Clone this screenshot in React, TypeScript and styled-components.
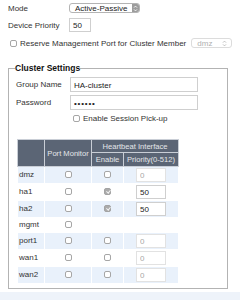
import React from 'react'
import styled, {createGlobalStyle} from 'styled-components'

const GlobalStyle = createGlobalStyle`
    body {
        margin: 0;
        background: #fff;
        font-family: "Liberation Sans", Arial, sans-serif;
        font-size: 8px;
        color: #333;
    }
`

const Page = styled.div`
    width: 240px;
    height: 300px;
    overflow: hidden;
`

const Top = styled.div`
    padding: 3px 0 0 8px;
`

const FieldRow = styled.div<{ h: number; mt?: number }>`
    display: flex;
    align-items: center;
    height: ${p => p.h}px;
    margin-top: ${p => p.mt || 0}px;
`

const Label = styled.div<{ w: number }>`
    width: ${p => p.w}px;
    flex-shrink: 0;
    color: #333;
`

const SelectBox = styled.div<{ w: number; disabled?: boolean }>`
    display: flex;
    align-items: center;
    justify-content: space-between;
    box-sizing: border-box;
    width: ${p => p.w}px;
    height: 10px;
    border: 1px solid ${p => (p.disabled ? '#dcdcdc' : '#b4b4b4')};
    border-radius: 3px;
    background: #fff;
    color: ${p => (p.disabled ? '#b0b0b0' : '#222')};
    padding-left: 5px;
    overflow: hidden;
`

const SelectArrow = styled.span<{ filled?: boolean }>`
    display: flex;
    align-items: center;
    justify-content: center;
    width: 7px;
    height: 100%;
    background: ${p => (p.filled ? '#9c9c9c' : 'transparent')};
    margin-right: ${p => (p.filled ? 0 : 3)}px;
`

const TextInput = styled.input<{ w: number; h: number; muted?: boolean }>`
    box-sizing: border-box;
    width: ${p => p.w}px;
    height: ${p => p.h}px;
    margin: 0;
    padding: 1px 0 0 3px;
    border: 1px solid ${p => (p.muted ? '#e2e2e2' : '#cfcfcf')};
    border-radius: 0;
    background: #fff;
    font-family: "Liberation Sans", Arial, sans-serif;
    font-size: 8px;
    color: ${p => (p.muted ? '#a8a8a8' : '#222')};
    outline: none;
`

const Check = styled.input`
    appearance: none;
    box-sizing: border-box;
    width: 7px;
    height: 7px;
    margin: 0;
    border: 1px solid #a6a6a6;
    border-radius: 2px;
    background: #fff;
    position: relative;
    vertical-align: middle;

    &:checked {
        background: #ababab;
        border-color: #a3a3a3;
    }
    &:checked::after {
        content: "";
        position: absolute;
        left: 1.5px;
        top: 0;
        width: 1.5px;
        height: 3px;
        border: solid #f4f4f4;
        border-width: 0 1px 1px 0;
        transform: rotate(40deg);
    }
`

const CheckLabel = styled.label<{ ml?: number }>`
    display: flex;
    align-items: center;
    gap: 3px;
    margin-left: ${p => p.ml || 0}px;
    color: #333;
`

const Group = styled.fieldset`
    box-sizing: border-box;
    width: 220px;
    height: 226px;
    margin: 15px 0 0 8px;
    padding: 0 0 0 7px;
    border: 1px solid #b3b3b3;
`

const Legend = styled.legend`
    padding: 0;
    margin-left: -1px;
    font-weight: bold;
    font-size: 8.5px;
    color: #111;
    line-height: 10px;
`

const Grid = styled.table`
    border-collapse: collapse;
    margin: 16px 0 0 1px;
    table-layout: fixed;
    width: 161px;
`

const Th = styled.th<{ h?: number }>`
    background: #5b6575;
    color: #e4e6ea;
    font-weight: normal;
    font-size: 7.6px;
    padding: 0;
    height: ${p => p.h || 12}px;
    border: 1px solid #c9ced6;
    text-align: center;
    white-space: nowrap;
    overflow: visible;
`

const Tr = styled.tr<{ shaded: boolean }>`
    background: ${p => (p.shaded ? '#e9f1fb' : '#fff')};
`

const Td = styled.td<{ h: number; left?: boolean }>`
    height: ${p => p.h}px;
    padding: 0 0 0 ${p => (p.left ? 1 : 0)}px;
    border: 1px solid #fff;
    text-align: ${p => (p.left ? 'left' : 'center')};
    vertical-align: middle;
    color: #333;
    line-height: 8px;
`

const BottomStrip = styled.div`
    height: 10px;
    margin-top: 3px;
    background: #eef3fa;
`

function Chevrons({color}: { color: string }): React.ReactElement {
    return (
        <svg width="5" height="7" viewBox="0 0 5 7">
            <path d="M1 2.6 L2.5 1.1 L4 2.6 M1 4.4 L2.5 5.9 L4 4.4" fill="none" stroke={color} strokeWidth="0.9"/>
        </svg>
    )
}

interface IPortRow {
    name: string;
    monitor: boolean;
    enable?: boolean;
    priority?: string;
}

const ports: IPortRow[] = [
    {name: 'dmz', monitor: false, enable: false, priority: '0'},
    {name: 'ha1', monitor: false, enable: true, priority: '50'},
    {name: 'ha2', monitor: false, enable: true, priority: '50'},
    {name: 'mgmt', monitor: false},
    {name: 'port1', monitor: false, enable: false, priority: '0'},
    {name: 'wan1', monitor: false, enable: false, priority: '0'},
    {name: 'wan2', monitor: false, enable: false, priority: '0'},
]

export default function App(): React.ReactElement {
    return (
        <Page>
            <GlobalStyle/>
            <Top>
                <FieldRow h={10}>
                    <Label w={61}>Mode</Label>
                    <SelectBox w={71}>
                        Active-Passive
                        <SelectArrow filled><Chevrons color="#fff"/></SelectArrow>
                    </SelectBox>
                </FieldRow>
                <FieldRow h={14} mt={5}>
                    <Label w={61}>Device Priority</Label>
                    <TextInput w={22} h={14} defaultValue="50" readOnly/>
                </FieldRow>
                <FieldRow h={10} mt={6}>
                    <CheckLabel ml={2}>
                        <Check type="checkbox"/>
                        Reserve Management Port for Cluster Member
                    </CheckLabel>
                    <SelectBox w={41} disabled style={{marginLeft: 5}}>
                        dmz
                        <SelectArrow><Chevrons color="#b8b8b8"/></SelectArrow>
                    </SelectBox>
                </FieldRow>
            </Top>
            <Group>
                <Legend>Cluster Settings</Legend>
                <FieldRow h={15} mt={4}>
                    <Label w={54}>Group Name</Label>
                    <TextInput w={128} h={15} defaultValue="HA-cluster" readOnly/>
                </FieldRow>
                <FieldRow h={15} mt={3}>
                    <Label w={54}>Password</Label>
                    <TextInput w={128} h={15} type="password" defaultValue="secret" readOnly style={{letterSpacing: 0.8}}/>
                </FieldRow>
                <FieldRow h={10} mt={3}>
                    <CheckLabel ml={57}>
                        <Check type="checkbox"/>
                        Enable Session Pick-up
                    </CheckLabel>
                </FieldRow>
                <Grid>
                    <colgroup>
                        <col style={{width: 27}}/>
                        <col style={{width: 47}}/>
                        <col style={{width: 32}}/>
                        <col style={{width: 55}}/>
                    </colgroup>
                    <thead>
                        <tr>
                            <Th rowSpan={2}/>
                            <Th rowSpan={2}>Port Monitor</Th>
                            <Th colSpan={2}>Heartbeat Interface</Th>
                        </tr>
                        <tr>
                            <Th h={13}>Enable</Th>
                            <Th h={13}>Priority(0-512)</Th>
                        </tr>
                    </thead>
                    <tbody>
                        {ports.map((port, i) => {
                            const h = port.priority === undefined ? 14 : 16
                            return (
                                <Tr key={port.name} shaded={i % 2 === 0}>
                                    <Td h={h} left>{port.name}</Td>
                                    <Td h={h}><Check type="checkbox" defaultChecked={port.monitor}/></Td>
                                    <Td h={h}>
                                        {port.enable !== undefined &&
                                            <Check type="checkbox" defaultChecked={port.enable}/>}
                                    </Td>
                                    <Td h={h}>
                                        {port.priority !== undefined &&
                                            <TextInput
                                                w={30}
                                                h={14}
                                                muted={port.priority === '0'}
                                                defaultValue={port.priority}
                                                readOnly
                                                style={{verticalAlign: 'middle'}}
                                            />}
                                    </Td>
                                </Tr>
                            )
                        })}
                    </tbody>
                </Grid>
            </Group>
            <BottomStrip/>
        </Page>
    )
}
